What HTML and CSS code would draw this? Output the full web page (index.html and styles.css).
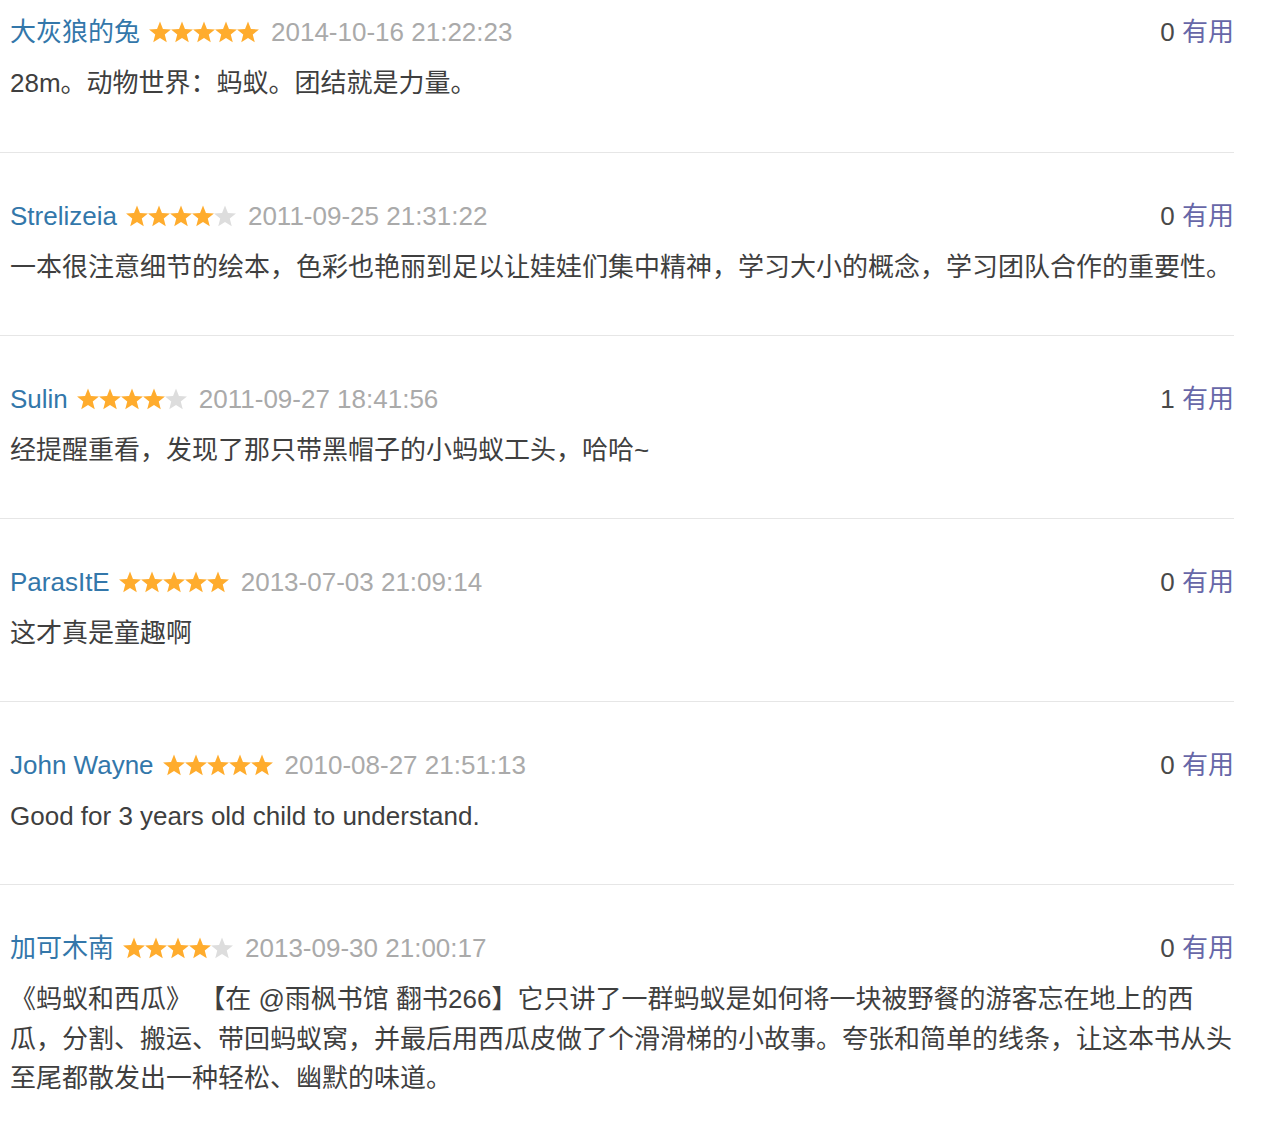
FILE: index.html
```html
<!DOCTYPE html>
<html lang="zh-CN">
<head>
<meta charset="utf-8">
<title>短评</title>
<link rel="stylesheet" href="styles.css">
</head>
<body>
<svg width="0" height="0" class="defs" aria-hidden="true">
  <defs>
    <path id="star" d="M11 0.5L13.94 7.95L21.94 8.45L15.76 13.55L17.76 21.3L11 17L4.24 21.3L6.24 13.55L0.06 8.45L8.06 7.95Z"/>
  </defs>
</svg>
<div class="list">
  <div class="item first">
    <div class="head">
      <div class="meta">
        <a class="name">大灰狼的兔</a>
        <span class="stars">
          <svg class="on" viewBox="0 0 22 22"><use href="#star"/></svg><svg class="on" viewBox="0 0 22 22"><use href="#star"/></svg><svg class="on" viewBox="0 0 22 22"><use href="#star"/></svg><svg class="on" viewBox="0 0 22 22"><use href="#star"/></svg><svg class="on" viewBox="0 0 22 22"><use href="#star"/></svg>
        </span>
        <span class="date">2014-10-16 21:22:23</span>
      </div>
      <div class="votes"><span class="count">0</span> <a class="useful">有用</a></div>
    </div>
    <p class="text">28m。动物世界：蚂蚁。团结就是力量。</p>
  </div>

  <div class="item">
    <div class="head">
      <div class="meta">
        <a class="name">Strelizeia</a>
        <span class="stars">
          <svg class="on" viewBox="0 0 22 22"><use href="#star"/></svg><svg class="on" viewBox="0 0 22 22"><use href="#star"/></svg><svg class="on" viewBox="0 0 22 22"><use href="#star"/></svg><svg class="on" viewBox="0 0 22 22"><use href="#star"/></svg><svg class="off" viewBox="0 0 22 22"><use href="#star"/></svg>
        </span>
        <span class="date">2011-09-25 21:31:22</span>
      </div>
      <div class="votes"><span class="count">0</span> <a class="useful">有用</a></div>
    </div>
    <p class="text">一本很注意细节的绘本，色彩也艳丽到足以让娃娃们集中精神，学习大小的概念，学习团队合作的重要性。</p>
  </div>

  <div class="item">
    <div class="head">
      <div class="meta">
        <a class="name">Sulin</a>
        <span class="stars">
          <svg class="on" viewBox="0 0 22 22"><use href="#star"/></svg><svg class="on" viewBox="0 0 22 22"><use href="#star"/></svg><svg class="on" viewBox="0 0 22 22"><use href="#star"/></svg><svg class="on" viewBox="0 0 22 22"><use href="#star"/></svg><svg class="off" viewBox="0 0 22 22"><use href="#star"/></svg>
        </span>
        <span class="date">2011-09-27 18:41:56</span>
      </div>
      <div class="votes"><span class="count">1</span> <a class="useful">有用</a></div>
    </div>
    <p class="text">经提醒重看，发现了那只带黑帽子的小蚂蚁工头，哈哈~</p>
  </div>

  <div class="item">
    <div class="head">
      <div class="meta">
        <a class="name">ParasItE</a>
        <span class="stars">
          <svg class="on" viewBox="0 0 22 22"><use href="#star"/></svg><svg class="on" viewBox="0 0 22 22"><use href="#star"/></svg><svg class="on" viewBox="0 0 22 22"><use href="#star"/></svg><svg class="on" viewBox="0 0 22 22"><use href="#star"/></svg><svg class="on" viewBox="0 0 22 22"><use href="#star"/></svg>
        </span>
        <span class="date">2013-07-03 21:09:14</span>
      </div>
      <div class="votes"><span class="count">0</span> <a class="useful">有用</a></div>
    </div>
    <p class="text">这才真是童趣啊</p>
  </div>

  <div class="item">
    <div class="head">
      <div class="meta">
        <a class="name">John Wayne</a>
        <span class="stars">
          <svg class="on" viewBox="0 0 22 22"><use href="#star"/></svg><svg class="on" viewBox="0 0 22 22"><use href="#star"/></svg><svg class="on" viewBox="0 0 22 22"><use href="#star"/></svg><svg class="on" viewBox="0 0 22 22"><use href="#star"/></svg><svg class="on" viewBox="0 0 22 22"><use href="#star"/></svg>
        </span>
        <span class="date">2010-08-27 21:51:13</span>
      </div>
      <div class="votes"><span class="count">0</span> <a class="useful">有用</a></div>
    </div>
    <p class="text">Good for 3 years old child to understand.</p>
  </div>

  <div class="item">
    <div class="head">
      <div class="meta">
        <a class="name">加可木南</a>
        <span class="stars">
          <svg class="on" viewBox="0 0 22 22"><use href="#star"/></svg><svg class="on" viewBox="0 0 22 22"><use href="#star"/></svg><svg class="on" viewBox="0 0 22 22"><use href="#star"/></svg><svg class="on" viewBox="0 0 22 22"><use href="#star"/></svg><svg class="off" viewBox="0 0 22 22"><use href="#star"/></svg>
        </span>
        <span class="date">2013-09-30 21:00:17</span>
      </div>
      <div class="votes"><span class="count">0</span> <a class="useful">有用</a></div>
    </div>
    <p class="text">《蚂蚁和西瓜》 【在 @雨枫书馆 翻书266】它只讲了一群蚂蚁是如何将一块被野餐的游客忘在地上的西瓜，分割、搬运、带回蚂蚁窝，并最后用西瓜皮做了个滑滑梯的小故事。夸张和简单的线条，让这本书从头至尾都散发出一种轻松、幽默的味道。</p>
  </div>
</div>
</body>
</html>
```

FILE: styles.css
```css
html, body {
  margin: 0;
  padding: 0;
  background: #fff;
}

body {
  font-family: "Liberation Sans", "Noto Sans CJK SC", sans-serif;
  color: #494949;
}

.defs {
  position: absolute;
  width: 0;
  height: 0;
}

.list {
  width: 1234px;
}

.item {
  border-top: 1px solid #e6e6e6;
  padding: 43px 0 47.5px 10px;
}

.item.first {
  border-top: none;
  padding-top: 12px;
  padding-bottom: 48.5px;
}

.head {
  display: flex;
  justify-content: space-between;
  align-items: center;
  height: 40px;
  font-size: 26px;
  line-height: 40px;
}

.meta {
  display: flex;
  align-items: center;
  white-space: nowrap;
}

.name {
  color: #3377aa;
  text-decoration: none;
}

.stars {
  display: inline-flex;
  align-items: center;
  margin-left: 9px;
  margin-right: 12px;
}

.stars svg {
  width: 22px;
  height: 22px;
  display: block;
}

.stars .on {
  fill: #ffac2d;
}

.stars .off {
  fill: #dddddd;
}

.date {
  color: #aaaaaa;
}

.votes {
  white-space: nowrap;
}

.count {
  color: #494949;
}

.useful {
  color: #6767a8;
  text-decoration: none;
}

.text {
  margin: 12px 0 0 0;
  font-size: 26px;
  line-height: 39.5px;
  color: #3f3f3f;
}
```
